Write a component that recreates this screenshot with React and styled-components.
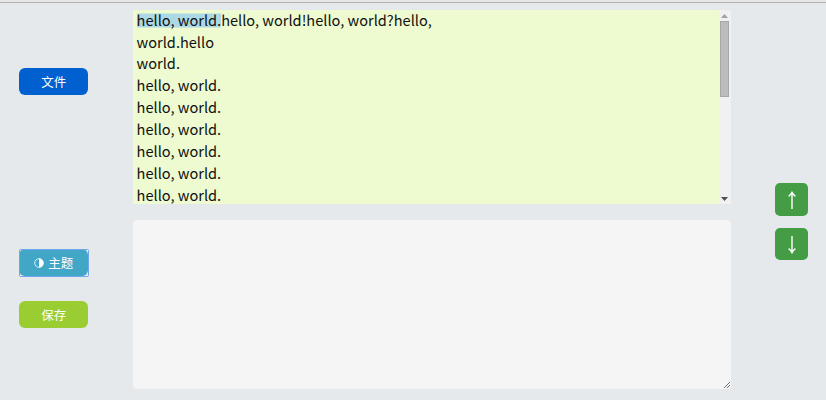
import React from "react";
import styled, { createGlobalStyle } from "styled-components";

const GlobalStyle = createGlobalStyle`
  *, *::before, *::after { box-sizing: border-box; }
  body {
    margin: 0;
    overflow: hidden;
    background: #e5e9ec;
    font-family: "Noto Sans CJK SC", sans-serif;
  }
`;

const Page = styled.div`
  height: 400px;
  display: flex;
  flex-direction: column;
`;

const TopBar = styled.header`
  flex: none;
  height: 3px;
  background: #e6e6e6;
  border-bottom: 1px solid #b4b4b5;
`;

const Workspace = styled.main`
  flex: 1;
  display: grid;
  grid-template-columns: 132.6px 598px 1fr;
`;

const Sidebar = styled.nav`
  display: flex;
  flex-direction: column;
  padding: 65px 0 0 19.3px;
`;

const ActionButton = styled.button`
  position: relative;
  display: flex;
  align-items: center;
  justify-content: center;
  gap: 4px;
  width: 68.8px;
  height: 27.2px;
  margin: 0 0 ${(p) => p.$gap || 0}px;
  padding: ${(p) => p.$padTop || 0}px 0 0;
  border: 0;
  border-radius: 6px;
  background: ${(p) => p.$color};
  color: #fff;
  font: 12.5px/18px "Noto Sans CJK SC", sans-serif;
  outline: none;
`;

const FocusRing = styled.span`
  position: absolute;
  inset: -0.5px;
  border: 1.3px solid #6ea6ee;
  border-radius: 1.5px;
`;

const Panels = styled.section`
  display: flex;
  flex-direction: column;
  gap: 16px;
  padding-top: 6.8px;
`;

const Reader = styled.div`
  display: flex;
  height: 194px;
  overflow: hidden;
  background: #eefad0;
  border-radius: 1px;
`;

const ReaderText = styled.div`
  flex: 1;
  overflow: hidden;
  padding: 0 4px;
  color: #111;
  font-size: 14.58px;
  line-height: 21.85px;
  white-space: pre;
`;

const TextLine = styled.div`
  height: 21.85px;
  transform: translateY(-0.52px);
`;

const Marked = styled.span`
  display: inline-block;
  height: 14px;
  line-height: 14px;
  background: #add8e6;
`;

const ScrollTrack = styled.div`
  display: flex;
  flex-direction: column;
  align-items: center;
  width: 12px;
  padding: 4px 1px 3px 0;
  background: #f1f1f1;
`;

const Thumb = styled.div`
  width: 9px;
  height: 76px;
  margin: 3px 0 auto;
  background: #bcbcbc;
  border: 1px solid #a8a8a8;
`;

const Output = styled.div`
  display: flex;
  align-items: flex-end;
  justify-content: flex-end;
  height: 169.4px;
  border-radius: 4px;
  background: #f5f5f5;
`;

const Stepper = styled.aside`
  display: flex;
  flex-direction: column;
  gap: 12px;
  padding: 180.2px 0 0 44.5px;
`;

const StepButton = styled.button`
  display: flex;
  align-items: center;
  justify-content: center;
  width: 32.6px;
  height: 32.5px;
  padding: 2px 0 0 1px;
  border: 0;
  border-radius: 5px;
  background: #449d44;
`;

const lines = ["world.hello", "world.", ...Array(6).fill("hello, world.")];

function ContrastIcon() {
  return (
    <svg width="10" height="10" viewBox="0 0 10 10">
      <circle cx="5" cy="5" r="4.3" fill="none" stroke="#fff" strokeWidth="0.8" />
      <path d="M5 .5A4.5 4.5 0 0 1 5 9.5Z" fill="#fff" />
    </svg>
  );
}

function ScrollArrow({ down }) {
  return (
    <svg width="7" height="4" viewBox="0 0 7 4">
      <path d={down ? "M0 0H7L3.5 4Z" : "M0 4H7L3.5 0Z"} fill={down ? "#505050" : "#a3a3a3"} />
    </svg>
  );
}

function StepArrow({ down }) {
  return (
    <svg width="10" height="18" viewBox="0 0 10 18" fill="none" stroke="#fff" strokeWidth="1.4">
      <path d={down ? "M5 0V17M1.6 12.7Q3.6 14 5 16.6Q6.4 14 8.4 12.7" : "M5 18V1M1.6 5.3Q3.6 4 5 1.4Q6.4 4 8.4 5.3"} />
    </svg>
  );
}

function ResizeGrip() {
  return (
    <svg width="8" height="8" viewBox="0 0 8 8" shapeRendering="crispEdges">
      <path d="M1 6h1v1H1zM2 5h1v1H2zM3 4h1v1H3zM4 3h1v1H4zM5 2h1v1H5zM6 1h1v1H6zM4 6h1v1H4zM5 5h1v1H5zM6 4h1v1H6z" fill="#707070" />
    </svg>
  );
}

export default function App() {
  return (
    <>
      <GlobalStyle />
      <Page>
        <TopBar />
        <Workspace>
          <Sidebar>
            <ActionButton $color="#0060cf" $gap={154}>文件</ActionButton>
            <ActionButton $color="#42a6c6" $gap={24.5}>
              <FocusRing />
              <ContrastIcon />
              主题
            </ActionButton>
            <ActionButton $color="#9acd32" $padTop={1.4}>保存</ActionButton>
          </Sidebar>
          <Panels>
            <Reader>
              <ReaderText>
                <TextLine>
                  <Marked>hello, world.</Marked>hello, world!hello, world?hello,
                </TextLine>
                {lines.map((line, i) => (
                  <TextLine key={i}>{line}</TextLine>
                ))}
              </ReaderText>
              <ScrollTrack>
                <ScrollArrow />
                <Thumb />
                <ScrollArrow down />
              </ScrollTrack>
            </Reader>
            <Output>
              <ResizeGrip />
            </Output>
          </Panels>
          <Stepper>
            <StepButton><StepArrow /></StepButton>
            <StepButton><StepArrow down /></StepButton>
          </Stepper>
        </Workspace>
      </Page>
    </>
  );
}
